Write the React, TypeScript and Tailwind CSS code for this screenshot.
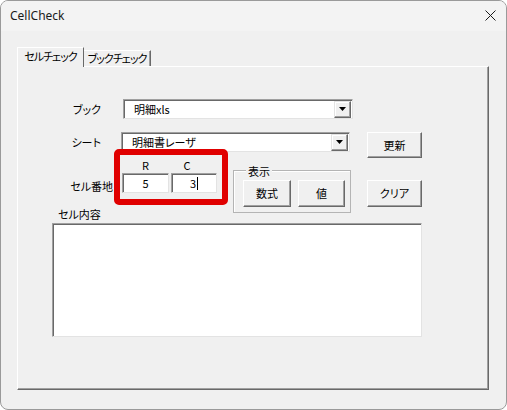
import React from "react";

const jp = "[font-family:'Noto_Sans_CJK_JP',sans-serif] [font-feature-settings:'palt']";

// raised Win32 push button
const Btn = ({ label, w, h }: { label: string; w: string; h: string }) => (
  <div
    className={`${w} ${h} flex items-center justify-center bg-[#f0f0f0] border border-t-white border-l-white border-r-[#696969] border-b-[#696969] shadow-[inset_-1px_-1px_0_#a0a0a0] text-[11px] text-black`}
  >
    {label}
  </div>
);

const Combo = ({ value, w }: { value: string; w: string }) => (
  <div
    className={`${w} h-[20px] flex items-center bg-white border border-t-[#a0a0a0] border-l-[#a0a0a0] border-r-[#e3e3e3] border-b-[#e3e3e3] shadow-[inset_1px_1px_0_#696969]`}
  >
    <span className="flex-1 pl-[10px] text-[11px] leading-[16px] text-black">{value}</span>
    <div className="w-[17px] h-[17px] mr-[1px] flex items-center justify-center bg-[#f0f0f0] border border-t-[#e3e3e3] border-l-[#e3e3e3] border-r-[#696969] border-b-[#696969] shadow-[inset_-1px_-1px_0_#a0a0a0,inset_1px_1px_0_#fff]">
      <svg width="7" height="4" viewBox="0 0 7 4">
        <polygon points="0,0 7,0 3.5,4" fill="#000" />
      </svg>
    </div>
  </div>
);

const TextBox = ({ value, w, caret }: { value: string; w: string; caret?: boolean }) => (
  <div
    className={`${w} h-[20px] flex items-center justify-center bg-white border border-t-[#a0a0a0] border-l-[#a0a0a0] border-r-[#e3e3e3] border-b-[#e3e3e3] shadow-[inset_1px_1px_0_#696969] text-[11px] text-black`}
  >
    <span>{value}</span>
    {caret && <span className="ml-[1px] w-[1px] h-[13px] bg-black" />}
  </div>
);

export default function App() {
  return (
    <div className={`relative w-[507px] h-[410px] bg-[#f0f0f0] border border-[#9a9a9a] rounded-[8px] overflow-hidden ${jp}`}>
      {/* title bar */}
      <div className="h-[30px] bg-[#f3f3f3] flex items-center justify-between pl-[9px] pr-[9px]">
        <span className="text-[12px] text-[#1a1a1a] [font-family:'Noto_Sans',sans-serif]">CellCheck</span>
        <svg width="11" height="11" viewBox="0 0 11 11" className="mt-[-1px] mr-[1px]">
          <path d="M0.5 0.5 L10.5 10.5 M10.5 0.5 L0.5 10.5" stroke="#1a1a1a" strokeWidth="1" />
        </svg>
      </div>

      <div className="pl-[16px] pt-[16px]">
        {/* tabs */}
        <div className="flex items-end">
          <div className="relative z-10 -mb-[1px] h-[20px] w-[67px] flex items-center justify-center pb-[2px] bg-[#f0f0f0] border-l border-t border-l-white border-t-white border-r border-r-[#696969] text-[11px] tracking-[-1px] text-black whitespace-nowrap">
            セルチェック
          </div>
          <div className="h-[16px] w-[67px] flex items-center justify-center border-t border-t-white border-r border-r-[#696969] shadow-[inset_-1px_0_0_#a0a0a0] text-[11px] tracking-[-1px] text-black whitespace-nowrap">
            ブックチェック
          </div>
        </div>

        {/* tab page */}
        <div className="w-[472px] h-[324px] border border-t-white border-l-white border-r-[#696969] border-b-[#696969] shadow-[inset_-1px_-1px_0_#a0a0a0]">
          <div className="flex items-center mt-[32px]">
            <span className="w-[83px] text-right text-[11px] text-black">ブック</span>
            <div className="ml-[22px]">
              <Combo value="明細xls" w="w-[230px]" />
            </div>
          </div>

          <div className="flex items-start mt-[13px]">
            <span className="w-[83px] h-[20px] leading-[20px] text-right text-[11px] text-black">シート</span>
            <div className="ml-[20px]">
              <Combo value="明細書レーザ" w="w-[229px]" />
            </div>
            <div className="ml-[17px]">
              <Btn label="更新" w="w-[55px]" h="h-[26px]" />
            </div>
          </div>

          <div className="flex items-start">
            <span className="w-[95px] mt-[18px] h-[20px] leading-[20px] text-right text-[11px] text-black">セル番地</span>
            <div className="ml-[9px] flex flex-col">
              <div className="flex h-[14px] leading-[14px] text-[11px] text-black">
                <span className="w-[47px] text-center">R</span>
                <span className="w-[36px] text-center">C</span>
              </div>
              <div className="flex gap-[2px] mt-[1px]">
                <TextBox value="5" w="w-[47px]" />
                <TextBox value="3" w="w-[46px]" caret />
              </div>
            </div>
            <div className="relative ml-[16px] mt-[12px] w-[118px] h-[43px] border border-[#b4b4b4] shadow-[inset_1px_1px_0_#fff] pl-[9px] pt-[9px]">
              <span className="absolute left-[12px] -top-[7px] px-[2px] h-[14px] leading-[14px] bg-[#f0f0f0] text-[11px] text-black">
                表示
              </span>
              <div className="flex gap-[7px]">
                <Btn label="数式" w="w-[48px]" h="h-[27px]" />
                <Btn label="値" w="w-[47px]" h="h-[27px]" />
              </div>
            </div>
            <div className="ml-[16px] mt-[22px]">
              <Btn label="クリア" w="w-[55px]" h="h-[27px]" />
            </div>
          </div>

          <div className="-mt-[6px] ml-[40px] h-[14px] leading-[14px] text-[11px] text-black">セル内容</div>
          <div className="mt-[2px] ml-[34px] w-[370px] h-[114px] bg-white border border-t-[#a0a0a0] border-l-[#a0a0a0] border-r-[#e3e3e3] border-b-[#e3e3e3] shadow-[inset_1px_1px_0_#696969]" />
        </div>
      </div>

      {/* red annotation frame drawn over the form */}
      <div className="absolute left-[113px] top-[148px] w-[114px] h-[56px] border-[6px] border-[#e00000] rounded-[5px]" />
    </div>
  );
}
